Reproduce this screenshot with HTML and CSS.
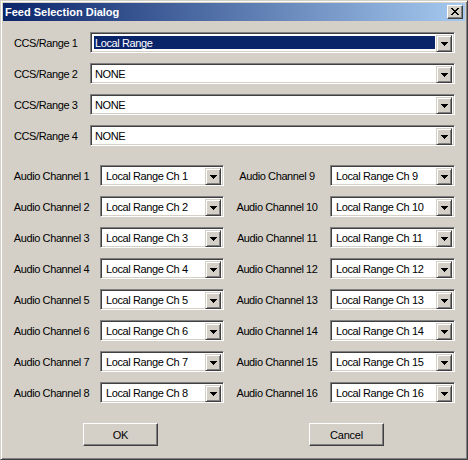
FILE: index.html
```html
<!DOCTYPE html>
<html>
<head>
<meta charset="utf-8">
<title>Feed Selection Dialog</title>
<link rel="stylesheet" href="styles.css">
</head>
<body>
<div class="window">
  <div class="titlebar">
    <span class="title">Feed Selection Dialog</span>
    <span class="close"><svg width="8" height="7" viewBox="0 0 8 7"><path d="M0 0h2v1h-2zM6 0h2v1h-2zM1 1h2v1h-2zM5 1h2v1h-2zM2 2h4v1h-4zM3 3h2v1h-2zM2 4h4v1h-4zM1 5h2v1h-2zM5 5h2v1h-2zM0 6h2v1h-2zM6 6h2v1h-2z" fill="#000"/></svg></span>
  </div>
  <div class="content">
    <div class="ccs">
      <span class="label">CCS/Range 1</span>
      <div class="combo"><span class="value selected">Local Range</span><span class="drop"><svg width="7" height="4" viewBox="0 0 7 4"><path d="M0 0h7v1h-7zM1 1h5v1h-5zM2 2h3v1h-3zM3 3h1v1h-1z" fill="#000"/></svg></span></div>
      <span class="label">CCS/Range 2</span>
      <div class="combo"><span class="value">NONE</span><span class="drop"><svg width="7" height="4" viewBox="0 0 7 4"><path d="M0 0h7v1h-7zM1 1h5v1h-5zM2 2h3v1h-3zM3 3h1v1h-1z" fill="#000"/></svg></span></div>
      <span class="label">CCS/Range 3</span>
      <div class="combo"><span class="value">NONE</span><span class="drop"><svg width="7" height="4" viewBox="0 0 7 4"><path d="M0 0h7v1h-7zM1 1h5v1h-5zM2 2h3v1h-3zM3 3h1v1h-1z" fill="#000"/></svg></span></div>
      <span class="label">CCS/Range 4</span>
      <div class="combo"><span class="value">NONE</span><span class="drop"><svg width="7" height="4" viewBox="0 0 7 4"><path d="M0 0h7v1h-7zM1 1h5v1h-5zM2 2h3v1h-3zM3 3h1v1h-1z" fill="#000"/></svg></span></div>
    </div>
    <div class="audio">
      <span class="alabel">Audio Channel 1</span>
      <div class="combo"><span class="value">Local Range Ch 1</span><span class="drop"><svg width="7" height="4" viewBox="0 0 7 4"><path d="M0 0h7v1h-7zM1 1h5v1h-5zM2 2h3v1h-3zM3 3h1v1h-1z" fill="#000"/></svg></span></div>
      <span class="alabel">Audio Channel 9</span>
      <div class="combo"><span class="value">Local Range Ch 9</span><span class="drop"><svg width="7" height="4" viewBox="0 0 7 4"><path d="M0 0h7v1h-7zM1 1h5v1h-5zM2 2h3v1h-3zM3 3h1v1h-1z" fill="#000"/></svg></span></div>
      <span class="alabel">Audio Channel 2</span>
      <div class="combo"><span class="value">Local Range Ch 2</span><span class="drop"><svg width="7" height="4" viewBox="0 0 7 4"><path d="M0 0h7v1h-7zM1 1h5v1h-5zM2 2h3v1h-3zM3 3h1v1h-1z" fill="#000"/></svg></span></div>
      <span class="alabel">Audio Channel 10</span>
      <div class="combo"><span class="value">Local Range Ch 10</span><span class="drop"><svg width="7" height="4" viewBox="0 0 7 4"><path d="M0 0h7v1h-7zM1 1h5v1h-5zM2 2h3v1h-3zM3 3h1v1h-1z" fill="#000"/></svg></span></div>
      <span class="alabel">Audio Channel 3</span>
      <div class="combo"><span class="value">Local Range Ch 3</span><span class="drop"><svg width="7" height="4" viewBox="0 0 7 4"><path d="M0 0h7v1h-7zM1 1h5v1h-5zM2 2h3v1h-3zM3 3h1v1h-1z" fill="#000"/></svg></span></div>
      <span class="alabel">Audio Channel 11</span>
      <div class="combo"><span class="value">Local Range Ch 11</span><span class="drop"><svg width="7" height="4" viewBox="0 0 7 4"><path d="M0 0h7v1h-7zM1 1h5v1h-5zM2 2h3v1h-3zM3 3h1v1h-1z" fill="#000"/></svg></span></div>
      <span class="alabel">Audio Channel 4</span>
      <div class="combo"><span class="value">Local Range Ch 4</span><span class="drop"><svg width="7" height="4" viewBox="0 0 7 4"><path d="M0 0h7v1h-7zM1 1h5v1h-5zM2 2h3v1h-3zM3 3h1v1h-1z" fill="#000"/></svg></span></div>
      <span class="alabel">Audio Channel 12</span>
      <div class="combo"><span class="value">Local Range Ch 12</span><span class="drop"><svg width="7" height="4" viewBox="0 0 7 4"><path d="M0 0h7v1h-7zM1 1h5v1h-5zM2 2h3v1h-3zM3 3h1v1h-1z" fill="#000"/></svg></span></div>
      <span class="alabel">Audio Channel 5</span>
      <div class="combo"><span class="value">Local Range Ch 5</span><span class="drop"><svg width="7" height="4" viewBox="0 0 7 4"><path d="M0 0h7v1h-7zM1 1h5v1h-5zM2 2h3v1h-3zM3 3h1v1h-1z" fill="#000"/></svg></span></div>
      <span class="alabel">Audio Channel 13</span>
      <div class="combo"><span class="value">Local Range Ch 13</span><span class="drop"><svg width="7" height="4" viewBox="0 0 7 4"><path d="M0 0h7v1h-7zM1 1h5v1h-5zM2 2h3v1h-3zM3 3h1v1h-1z" fill="#000"/></svg></span></div>
      <span class="alabel">Audio Channel 6</span>
      <div class="combo"><span class="value">Local Range Ch 6</span><span class="drop"><svg width="7" height="4" viewBox="0 0 7 4"><path d="M0 0h7v1h-7zM1 1h5v1h-5zM2 2h3v1h-3zM3 3h1v1h-1z" fill="#000"/></svg></span></div>
      <span class="alabel">Audio Channel 14</span>
      <div class="combo"><span class="value">Local Range Ch 14</span><span class="drop"><svg width="7" height="4" viewBox="0 0 7 4"><path d="M0 0h7v1h-7zM1 1h5v1h-5zM2 2h3v1h-3zM3 3h1v1h-1z" fill="#000"/></svg></span></div>
      <span class="alabel">Audio Channel 7</span>
      <div class="combo"><span class="value">Local Range Ch 7</span><span class="drop"><svg width="7" height="4" viewBox="0 0 7 4"><path d="M0 0h7v1h-7zM1 1h5v1h-5zM2 2h3v1h-3zM3 3h1v1h-1z" fill="#000"/></svg></span></div>
      <span class="alabel">Audio Channel 15</span>
      <div class="combo"><span class="value">Local Range Ch 15</span><span class="drop"><svg width="7" height="4" viewBox="0 0 7 4"><path d="M0 0h7v1h-7zM1 1h5v1h-5zM2 2h3v1h-3zM3 3h1v1h-1z" fill="#000"/></svg></span></div>
      <span class="alabel">Audio Channel 8</span>
      <div class="combo"><span class="value">Local Range Ch 8</span><span class="drop"><svg width="7" height="4" viewBox="0 0 7 4"><path d="M0 0h7v1h-7zM1 1h5v1h-5zM2 2h3v1h-3zM3 3h1v1h-1z" fill="#000"/></svg></span></div>
      <span class="alabel">Audio Channel 16</span>
      <div class="combo"><span class="value">Local Range Ch 16</span><span class="drop"><svg width="7" height="4" viewBox="0 0 7 4"><path d="M0 0h7v1h-7zM1 1h5v1h-5zM2 2h3v1h-3zM3 3h1v1h-1z" fill="#000"/></svg></span></div>
    </div>
    <div class="buttons">
      <div class="btn">OK</div>
      <div class="btn">Cancel</div>
    </div>
  </div>
</div>
</body>
</html>
```
FILE: styles.css
```css
html, body {
  margin: 0;
  padding: 0;
  background: #d4d0c8;
}
body {
  font-family: "Liberation Sans", Arial, sans-serif;
  font-size: 11px;
  color: #000;
}
.window {
  width: 468px;
  height: 460px;
  box-sizing: border-box;
  border: 1px solid;
  border-color: #d4d0c8 #404040 #404040 #d4d0c8;
  box-shadow: inset 1px 1px #ffffff, inset -1px -1px #808080;
  padding: 2px;
  background: #d4d0c8;
  display: flex;
  flex-direction: column;
}
.titlebar {
  height: 18px;
  background: linear-gradient(to right, #0a246a, #a6caf0);
  display: flex;
  align-items: center;
  justify-content: space-between;
  padding: 0 2px 0 2px;
}
.title {
  color: #fff;
  font-weight: bold;
  font-size: 11px;
  line-height: 18px;
}
.close {
  width: 16px;
  height: 14px;
  box-sizing: border-box;
  background: #d4d0c8;
  border: 1px solid;
  border-color: #ffffff #404040 #404040 #ffffff;
  box-shadow: inset -1px -1px #808080;
  display: flex;
  align-items: center;
  justify-content: center;
  padding: 0 1px 1px 0;
}
.close svg { display: block; }
.content {
  display: flex;
  flex-direction: column;
  padding-top: 11px;
}
.ccs {
  display: grid;
  grid-template-columns: 87px 365px;
  grid-auto-rows: 21px;
  row-gap: 10px;
}
.label, .alabel, .value {
  letter-spacing: -0.4px;
  white-space: nowrap;
}
.label {
  padding-left: 11px;
  align-self: center;
}
.combo {
  height: 21px;
  box-sizing: border-box;
  border: 1px solid;
  border-color: #808080 #ffffff #ffffff #808080;
  box-shadow: inset 1px 1px #404040, inset -1px -1px #d4d0c8;
  background: #fff;
  padding: 2px;
  display: flex;
}
.value {
  flex: 1;
  line-height: 17px;
  padding-left: 2px;
  overflow: hidden;
}
.value.selected {
  margin: 1px;
  padding-left: 1px;
  line-height: 15px;
  background: #0a246a;
  color: #fff;
}
.drop {
  width: 16px;
  height: 17px;
  box-sizing: border-box;
  background: #d4d0c8;
  border: 1px solid;
  border-color: #d4d0c8 #404040 #404040 #d4d0c8;
  box-shadow: inset 1px 1px #ffffff, inset -1px -1px #808080;
  display: flex;
  align-items: center;
  justify-content: center;
  padding-left: 1px;
}
.drop svg { display: block; }
.audio {
  margin-top: 19px;
  display: grid;
  grid-template-columns: 97px 124px 106px 125px;
  grid-auto-rows: 21px;
  row-gap: 10px;
}
.alabel {
  text-align: center;
  align-self: center;
}
.audio .value {
  padding-left: 3px;
}
.buttons {
  margin-top: 20px;
  display: flex;
  padding-left: 80px;
  gap: 151px;
}
.btn {
  width: 75px;
  height: 23px;
  box-sizing: border-box;
  border: 1px solid;
  border-color: #ffffff #404040 #404040 #ffffff;
  box-shadow: inset -1px -1px #808080;
  background: #d4d0c8;
  display: flex;
  align-items: center;
  justify-content: center;
  letter-spacing: -0.2px;
}
```
